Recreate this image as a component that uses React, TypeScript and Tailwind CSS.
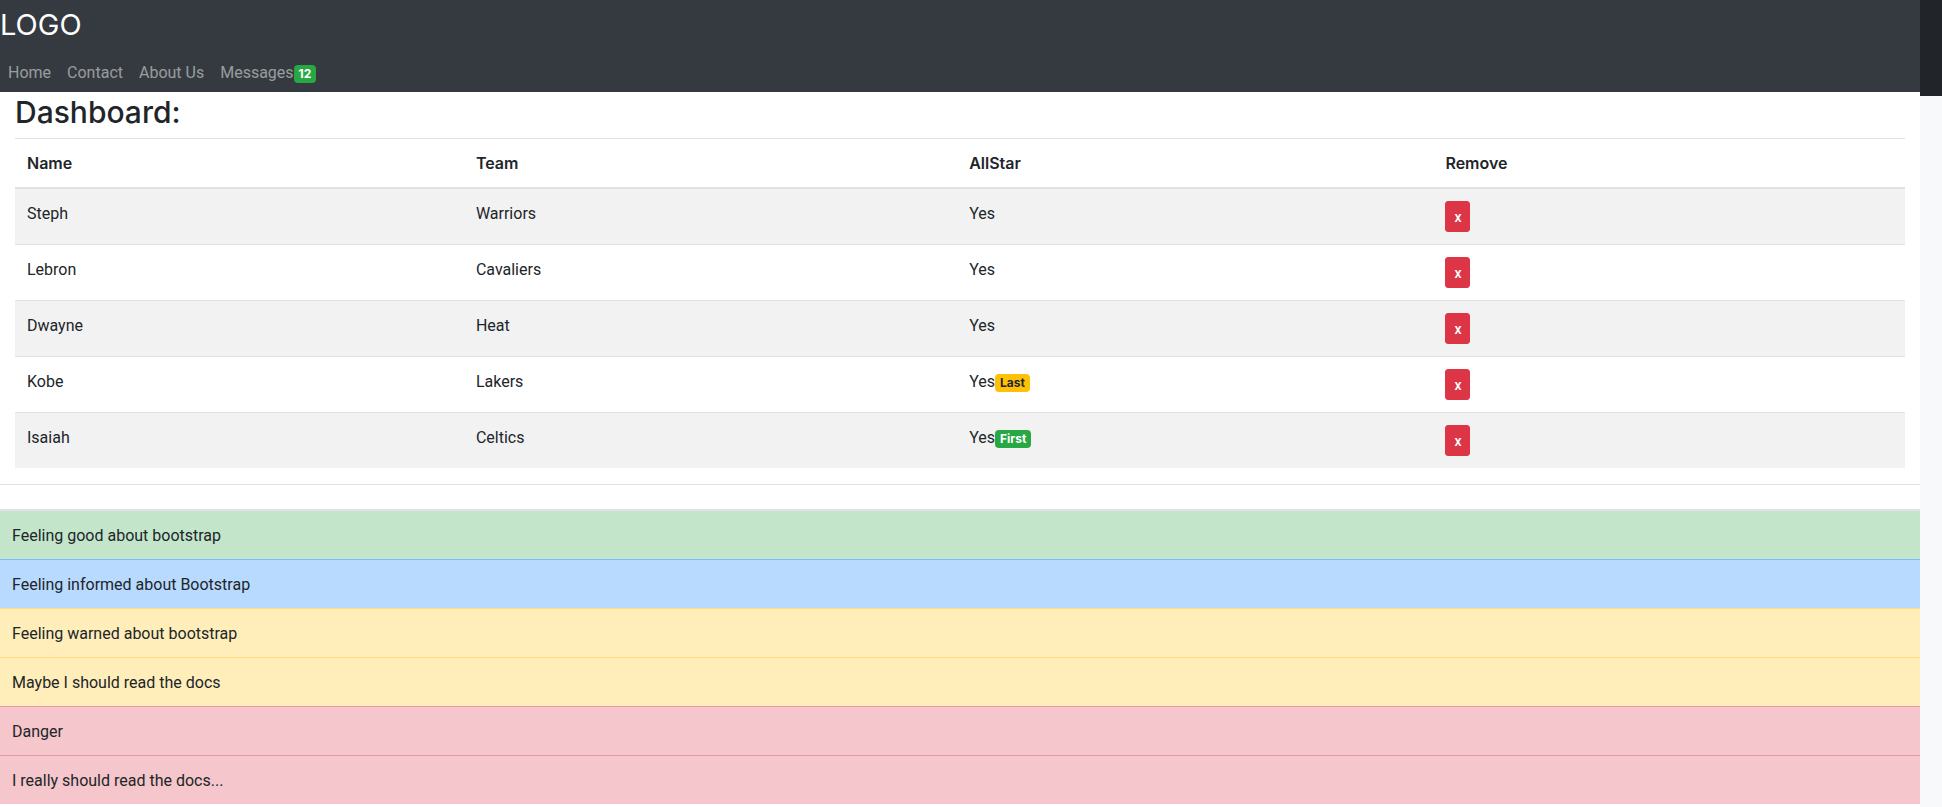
import { useState } from "react";

type Player = {
  name: string;
  team: string;
  allStar: string;
  badge?: { text: string; tone: string };
};

const initialPlayers: Player[] = [
  { name: "Steph", team: "Warriors", allStar: "Yes" },
  { name: "Lebron", team: "Cavaliers", allStar: "Yes" },
  { name: "Dwayne", team: "Heat", allStar: "Yes" },
  { name: "Kobe", team: "Lakers", allStar: "Yes", badge: { text: "Last", tone: "bg-[#ffc107] text-[#212529]" } },
  { name: "Isaiah", team: "Celtics", allStar: "Yes", badge: { text: "First", tone: "bg-[#28a745] text-white" } },
];

const feelings = [
  { text: "Feeling good about bootstrap", tone: "bg-[#c3e6cb] border-t-2 border-[#dee2e6]" },
  { text: "Feeling informed about Bootstrap", tone: "bg-[#b8daff] border-t border-[#7abaff]" },
  { text: "Feeling warned about bootstrap", tone: "bg-[#ffeeba] border-t border-[#ffdf7e]" },
  { text: "Maybe I should read the docs", tone: "bg-[#ffeeba] border-t border-[#ffdf7e]" },
  { text: "Danger", tone: "bg-[#f5c6cb] border-t border-[#ed969e]" },
  { text: "I really should read the docs...", tone: "bg-[#f5c6cb] border-t border-[#ed969e]" },
];

const cell = "px-3 pt-[13px] pb-[11px]";
const navLink = "px-2 pt-[9px] pb-[7px]";

function Badge({ text, tone }: { text: string; tone: string }) {
  return (
    <span className={`inline-block rounded px-[5px] py-[3px] text-center align-baseline font-[Inter,sans-serif] text-xs leading-3 font-bold ${tone}`}>
      {text}
    </span>
  );
}

function NavBar() {
  return (
    <header className="bg-[#343a40]">
      <div className="pt-1 pb-1.5 font-[Inter,sans-serif] text-[29px] leading-[42px] text-white">LOGO</div>
      <nav className="flex text-white/50">
        <a href="#home" className={navLink}>Home</a>
        <a href="#contact" className={navLink}>Contact</a>
        <a href="#about" className={navLink}>About Us</a>
        <a href="#messages" className={navLink}>
          Messages
          <Badge text="12" tone="bg-[#28a745] text-white" />
        </a>
      </nav>
    </header>
  );
}

function PlayerTable() {
  const [players, setPlayers] = useState(initialPlayers);
  return (
    <table className="mb-4 w-full table-fixed border-collapse text-left">
      <thead className="font-[Inter,sans-serif]">
        <tr className="border-t border-b-2 border-[#dee2e6]">
          <th scope="col" className="w-[23.75%] p-3 font-semibold">Name</th>
          <th scope="col" className="w-[26.1%] p-3 font-semibold">Team</th>
          <th scope="col" className="w-[25.2%] p-3 font-semibold">AllStar</th>
          <th scope="col" className="w-[24.95%] p-3 font-semibold">Remove</th>
        </tr>
      </thead>
      <tbody>
        {players.map((player) => (
          <tr key={player.name} className="border-t border-[#dee2e6] align-top odd:bg-[#f2f2f2]">
            <td className={cell}>{player.name}</td>
            <td className={cell}>{player.team}</td>
            <td className={cell}>
              {player.allStar}
              {player.badge && <Badge text={player.badge.text} tone={player.badge.tone} />}
            </td>
            <td className="p-3">
              <button
                type="button"
                aria-label={`Remove ${player.name}`}
                onClick={() => setPlayers(players.filter((p) => p !== player))}
                className="block rounded-[3px] border border-[#dc3545] bg-[#dc3545] px-2 pt-[5px] pb-[3px] text-sm leading-[21px] font-medium text-white"
              >
                x
              </button>
            </td>
          </tr>
        ))}
      </tbody>
    </table>
  );
}

export default function App() {
  return (
    <div className="flex min-h-screen bg-[#f8f9fa] font-[Roboto,sans-serif] text-base leading-6 text-[#212529]">
      <div className="min-w-0 flex-1 bg-white">
        <NavBar />
        <main>
          <section className="px-[15px]">
            <h2 className="pt-px pb-[7px] font-[Inter,sans-serif] text-[30px] leading-[38px] font-medium">Dashboard:</h2>
            <PlayerTable />
          </section>
          <section className="border-t border-[#dee2e6] pt-6">
            <ul>
              {feelings.map((feeling) => (
                <li key={feeling.text} className={`${cell} ${feeling.tone}`}>
                  {feeling.text}
                </li>
              ))}
            </ul>
          </section>
        </main>
      </div>
      <div className="w-[22px] shrink-0">
        <div className="h-24 bg-[#212529]" />
      </div>
    </div>
  );
}
